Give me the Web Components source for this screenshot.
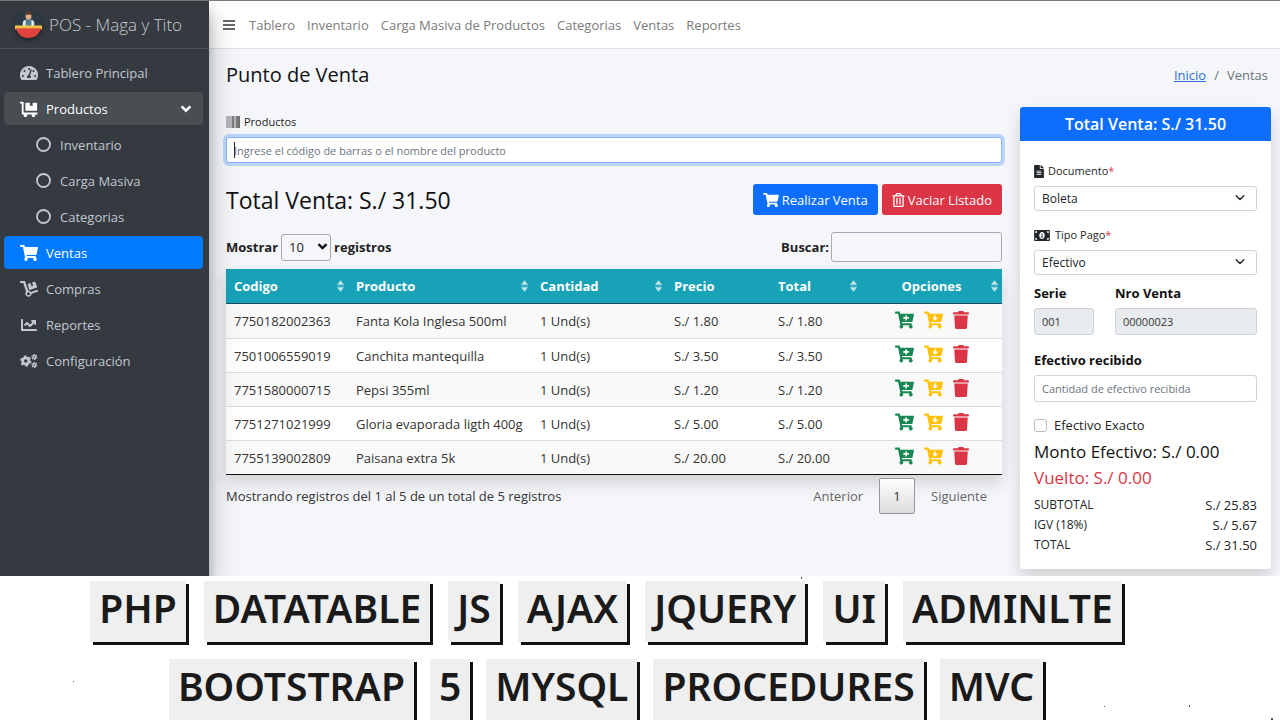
<!DOCTYPE html>
<html lang="es">
<head>
<meta charset="utf-8">
<title>POS - Maga y Tito</title>
<style>
html, body { height: 100%; }
body { margin: 0; overflow: hidden; font-family: "Open Sans", "Noto Sans", sans-serif; font-size: 13px; line-height: 20px; color: #212529; background: #fff; }
</style>
</head>
<body>
<pos-app></pos-app>
<script>
const ICONS = {
  cart: ['0 0 576 512', '<path d="M528 301l47-208c4-15-8-29-23-29H159l-9-45C148 8 138 0 127 0H24C11 0 0 11 0 24v16c0 13 11 24 24 24h70l70 343c-17 10-28 28-28 49a56 56 0 1 0 95-40h210a56 56 0 1 0 63-10l6-25c3-15-8-29-23-29H218l-6-32h293c11 0 21-8 23-19z"/>'],
  cartPlus: ['0 0 576 512', '<path fill-rule="evenodd" d="M528 301l47-208c4-15-8-29-23-29H159l-9-45C148 8 138 0 127 0H24C11 0 0 11 0 24v16c0 13 11 24 24 24h70l70 343c-17 10-28 28-28 49a56 56 0 1 0 95-40h210a56 56 0 1 0 63-10l6-25c3-15-8-29-23-29H218l-6-32h293c11 0 21-8 23-19zM408 168h-48v-40c0-9-7-16-16-16h-16c-9 0-16 7-16 16v40h-48c-9 0-16 7-16 16v16c0 9 7 16 16 16h48v40c0 9 7 16 16 16h16c9 0 16-7 16-16v-40h48c9 0 16-7 16-16v-16c0-9-7-16-16-16z"/>'],
  cartDown: ['0 0 576 512', '<path fill-rule="evenodd" d="M528 301l47-208c4-15-8-29-23-29H159l-9-45C148 8 138 0 127 0H24C11 0 0 11 0 24v16c0 13 11 24 24 24h70l70 343c-17 10-28 28-28 49a56 56 0 1 0 95-40h210a56 56 0 1 0 63-10l6-25c3-15-8-29-23-29H218l-6-32h293c11 0 21-8 23-19zM404 180h-44v-56c0-8-5-12-12-12h-24c-7 0-12 4-12 12v56h-44c-11 0-16 13-8 20l68 68c5 5 11 5 16 0l68-68c8-7 3-20-8-20z"/>'],
  trash: ['0 0 448 512', '<path d="M432 32H312l-9-19A24 24 0 0 0 281 0H167a24 24 0 0 0-22 13l-9 19H16A16 16 0 0 0 0 48v32a16 16 0 0 0 16 16h416a16 16 0 0 0 16-16V48a16 16 0 0 0-16-16zM53 467a48 48 0 0 0 48 45h246a48 48 0 0 0 48-45l21-339H32z"/>'],
  trashOutline: ['0 0 448 512', '<path d="M268 416h24a12 12 0 0 0 12-12V188a12 12 0 0 0-12-12h-24a12 12 0 0 0-12 12v216a12 12 0 0 0 12 12zM432 80h-82l-34-57A48 48 0 0 0 274 0H174a48 48 0 0 0-42 23L98 80H16A16 16 0 0 0 0 96v16a16 16 0 0 0 16 16h16v336a48 48 0 0 0 48 48h288a48 48 0 0 0 48-48V128h16a16 16 0 0 0 16-16V96a16 16 0 0 0-16-16zM172 51a6 6 0 0 1 5-3h94a6 6 0 0 1 5 3l18 29H154zM368 464H80V128h288zm-212-48h24a12 12 0 0 0 12-12V188a12 12 0 0 0-12-12h-24a12 12 0 0 0-12 12v216a12 12 0 0 0 12 12z"/>'],
  chart: ['0 0 512 512', '<path d="M496 384H64V80c0-9-7-16-16-16H16C7 64 0 71 0 80v336c0 18 14 32 32 32h464c9 0 16-7 16-16v-32c0-9-7-16-16-16zM464 96H346c-21 0-32 26-17 41l32 32-73 74-73-74c-13-12-33-12-46 0l-68 69c-7 6-7 16 0 23l22 22c7 7 17 7 23 0l46-46 73 74c13 12 33 12 46 0l96-96 32 32c15 15 41 4 41-17V112c0-9-7-16-16-16z"/>'],
  gauge: ['0 0 576 512', '<path fill-rule="evenodd" d="M288 32a288 288 0 0 0-249 433c6 10 17 15 28 15h442c11 0 22-5 28-15A288 288 0 0 0 288 32zM288 92a32 32 0 1 1 0 64 32 32 0 0 1 0-64zM96 384a32 32 0 1 1 0-64 32 32 0 0 1 0 64zm48-160a32 32 0 1 1 0-64 32 32 0 0 1 0 64zm336 160a32 32 0 1 1 0-64 32 32 0 0 1 0 64zm-48-160a32 32 0 1 1 0-64 32 32 0 0 1 0 64zM340 416H236c-24-38-4-90 40-96l57-172c10-18 46-10 44 12l-57 172c28 20 33 56 20 84z"/>'],
  flatbed: ['0 0 640 512', '<path d="M208 320h384c9 0 16-7 16-16V48c0-9-7-16-16-16H448v128l-48-32-48 32V32H208c-9 0-16 7-16 16v256c0 9 7 16 16 16zm416 64H128V16c0-9-7-16-16-16H16C7 0 0 7 0 16v32c0 9 7 16 16 16h48v368c0 9 7 16 16 16h54a64 64 0 1 0 116 0h172a64 64 0 1 0 116 0h70c9 0 16-7 16-16v-32c0-9-7-16-16-16z"/>'],
  dolly: ['0 0 576 512', '<path d="M294 278c6 3 12 5 18 9l230-77c9-3 13-12 10-21l-62-158c-3-9-12-13-20-10l-84 28 34 100-50 17-34-101-76 26c-9 3-13 12-10 20zM575 323l-10-30c-3-9-12-13-20-10L345 350c-18-24-46-40-79-41L163 11C161 4 154 0 147 0H16C7 0 0 7 0 16v32c0 9 7 16 16 16h86l93 273a100 100 0 1 0 175 74l195-68c9-3 13-12 10-20zM272 456a48 48 0 1 1 0-96 48 48 0 0 1 0 96z"/>'],
  cogs: ['0 0 640 512', '<g fill="none" stroke="currentColor"><circle cx="205" cy="256" r="110" stroke-width="96"/><circle cx="205" cy="256" r="172" stroke-width="56" stroke-dasharray="90 90"/><circle cx="510" cy="116" r="52" stroke-width="54"/><circle cx="510" cy="116" r="90" stroke-width="38" stroke-dasharray="47 47"/><circle cx="510" cy="396" r="52" stroke-width="54"/><circle cx="510" cy="396" r="90" stroke-width="38" stroke-dasharray="47 47"/></g>'],
  circle: ['0 0 512 512', '<circle cx="256" cy="256" r="222" fill="none" stroke="currentColor" stroke-width="62"/>'],
  chevron: ['0 0 16 16', '<path d="M3 5l5 5 5-5" fill="none" stroke="currentColor" stroke-width="2" stroke-linecap="round" stroke-linejoin="round"/>'],
  chevronBold: ['0 0 16 16', '<path d="M3 5l5 5 5-5" fill="none" stroke="currentColor" stroke-width="3"/>'],
  bars: ['0 0 12 12', '<path d="M0 2h12M0 6h12M0 10h12" stroke="currentColor" stroke-width="2"/>'],
  barcode: ['0 0 14 12', '<path d="M1 0v12M3 0v12M5 0v12M9 0v12" stroke="#777" stroke-width="1"/><path d="M7 0v12M11 0v12" stroke="#555" stroke-width="1.5"/><path d="M13 0v12" stroke="#444" stroke-width="1.5"/>'],
  file: ['0 0 384 512', '<path d="M224 136V0H24C11 0 0 11 0 24v464c0 13 11 24 24 24h336c13 0 24-11 24-24V160H248c-13 0-24-11-24-24zm64 236c0 7-5 12-12 12H108c-7 0-12-5-12-12v-8c0-7 5-12 12-12h168c7 0 12 5 12 12zm0-64c0 7-5 12-12 12H108c-7 0-12-5-12-12v-8c0-7 5-12 12-12h168c7 0 12 5 12 12zm0-72v8c0 7-5 12-12 12H108c-7 0-12-5-12-12v-8c0-7 5-12 12-12h168c7 0 12 5 12 12zm96-114v6H256V0h6c6 0 13 3 17 7l98 98c5 5 7 11 7 17z"/>'],
  money: ['0 0 640 448', '<path fill-rule="evenodd" d="M30 0h580q30 0 30 30v388q0 30-30 30H30q-30 0-30-30V30Q0 0 30 0zM48 48v80q72-8 80-80zM592 48h-80q8 72 80 80zM48 400h80q-8-72-80-80zM592 400v-80q-72 8-80 80zM320 84c-62 0-112 63-112 140s50 140 112 140 112-63 112-140S382 84 320 84z"/><path d="M286 160l26-18h26v132h28v28h-90v-28h28v-92h-18z"/>'],
  sort: ['0 0 8 13', '<path d="M4 0l4 5H0zM4 13l4-5H0z"/><path d="M0 6.500h8" stroke="currentColor" stroke-width="1" opacity=".4"/>']
};

const define = (name, html, setup) => {
  const template = document.createElement('template');
  template.innerHTML = html;
  customElements.define(name, class extends HTMLElement {
    connectedCallback() {
      if (this.shadowRoot) return;
      const root = this.attachShadow({ mode: 'open' });
      root.append(template.content.cloneNode(true));
      if (setup) setup(this, root);
    }
  });
};

define('pos-icon', `<style>
:host { display: inline-block; flex: none; width: 16px; height: 16px; }
svg { display: block; width: 100%; height: 100%; fill: currentColor; }
</style><svg aria-hidden="true"></svg>`, (el, root) => {
  const [box, shapes] = ICONS[el.getAttribute('name')];
  const svg = root.querySelector('svg');
  svg.setAttribute('viewBox', box);
  svg.innerHTML = shapes;
});

define('side-item', `<style>
:host { display: block; color: #c2c7d0; }
a { display: flex; align-items: center; height: 33px; padding: 0 10px 0 16px; border-radius: 4px; color: inherit; text-decoration: none; }
.icon { width: 18px; display: flex; justify-content: center; margin-right: 8px; }
.icon pos-icon { width: 18px; height: 16px; }
.caret { width: 14px; height: 14px; margin-left: auto; }
:host([open]) a { background: #494e53; color: #fff; }
:host([active]) a { background: #007bff; color: #fff; }
:host([sub]) a { padding-left: 30px; }
:host([sub]) .icon pos-icon { width: 15px; height: 15px; }
</style><a href="#"><span class="icon"></span><slot></slot></a>`, (el, root) => {
  root.querySelector('.icon').innerHTML = `<pos-icon name="${el.getAttribute('icon')}"></pos-icon>`;
  if (el.hasAttribute('open')) root.querySelector('a').insertAdjacentHTML('beforeend', '<pos-icon class="caret" name="chevronBold"></pos-icon>');
});

define('side-bar', `<style>
:host { display: block; background: #343a40; box-shadow: 0 14px 28px rgba(0,0,0,.25), 0 10px 10px rgba(0,0,0,.22); z-index: 2; }
.brand { display: flex; align-items: center; gap: 6px; height: 47px; padding: 0 14px; border-bottom: 1px solid #4b545c; color: #c8cbcf; text-decoration: none; font-size: 17px; font-weight: 300; white-space: nowrap; }
.brand svg { width: 29px; height: 29px; flex: none; filter: drop-shadow(0 2px 2px rgba(0,0,0,.4)); }
nav { display: flex; flex-direction: column; gap: 3px; padding: 7px 6px 7px 4px; }
</style>
<a class="brand" href="#"><svg viewBox="0 0 30 30" aria-hidden="true">
<circle cx="15" cy="15" r="14" fill="#2b3b45"/><path d="M9 17v-3q0-4 4-4h4q4 0 4 4v3z" fill="#e8ecef"/><path d="M12 10h6v7h-6z" fill="#4f7d92"/><rect x="12" y="3" width="6" height="7" rx="3" fill="#e3ae86"/><path d="M12 5q0-4 3-4t3 4z" fill="#5a3a2a"/>
<path d="M1 16h28v4H1z" fill="#f0c544"/><path d="M2 19h26q-3 10-13 10T2 19z" fill="#e3433e"/></svg>POS - Maga y Tito</a>
<nav>
<side-item icon="gauge">Tablero Principal</side-item>
<side-item icon="flatbed" open>Productos</side-item>
<side-item icon="circle" sub>Inventario</side-item>
<side-item icon="circle" sub>Carga Masiva</side-item>
<side-item icon="circle" sub>Categorias</side-item>
<side-item icon="cart" active>Ventas</side-item>
<side-item icon="dolly">Compras</side-item>
<side-item icon="chart">Reportes</side-item>
<side-item icon="cogs">Configuración</side-item>
</nav>`);

define('top-nav', `<style>
:host { display: flex; align-items: center; gap: 12px; height: 47px; padding: 0 14px; background: #fff; border-bottom: 1px solid #dee2e6; }
a { color: #7b7b7b; text-decoration: none; white-space: nowrap; }
button { display: flex; padding: 0; margin-right: 2px; border: 0; background: none; color: #666; }
pos-icon { width: 12px; height: 12px; }
</style>
<button aria-label="Menú"><pos-icon name="bars"></pos-icon></button>
<a href="#">Tablero</a><a href="#">Inventario</a><a href="#">Carga Masiva de Productos</a><a href="#">Categorias</a><a href="#">Ventas</a><a href="#">Reportes</a>`);

define('page-header', `<style>
:host { display: flex; align-items: center; justify-content: space-between; height: 52px; padding: 0 12px 0 17px; }
h1 { margin: 0; font-size: 20px; font-weight: 400; color: #111; }
nav { display: flex; gap: 8px; color: #6c757d; }
a { color: #2f6fd6; }
</style><h1><slot></slot></h1><nav aria-label="Ruta"><a href="#">Inicio</a><span>/</span><span>Ventas</span></nav>`);

define('product-search', `<style>
:host { display: block; }
label { display: flex; align-items: center; gap: 4px; height: 20px; margin: 5px 0 5px; font-size: 11px; color: #222; }
pos-icon { width: 14px; height: 12px; }
input { display: block; box-sizing: border-box; width: 100%; height: 26px; padding: 0 7px; border: 1px solid #86b7fe; border-radius: 3px; font: inherit; font-size: 11px; outline: 0; box-shadow: 0 0 0 3px #bdd5fb; background: linear-gradient(#222, #222) 7px 50% / 1px 16px no-repeat #fff; }
input::placeholder { color: #6c757d; opacity: 1; }
</style><label for="q"><pos-icon name="barcode"></pos-icon>Productos</label>
<input id="q" placeholder="Ingrese el código de barras o el nombre del producto">`);

define('sale-bar', `<style>
:host { display: flex; align-items: center; gap: 4px; height: 31px; margin-top: 21px; }
h2 { margin: 0 auto 0 0; font-size: 23px; font-weight: 400; line-height: 30px; color: #111; }
button { display: flex; align-items: center; gap: 3px; height: 31px; padding: 0 10px; border: 0; border-radius: 3px; background: #0d6efd; color: #fff; font: inherit; }
.danger { background: #dc3545; }
pos-icon { width: 16px; height: 14px; }
.danger pos-icon { width: 13px; }
</style><h2>Total Venta: S./ 31.50</h2>
<button><pos-icon name="cart"></pos-icon>Realizar Venta</button>
<button class="danger"><pos-icon name="trashOutline"></pos-icon>Vaciar Listado</button>`);

define('sale-table', `<style>
:host { display: block; }
.tools { display: flex; justify-content: space-between; align-items: center; height: 30px; margin: 17px 0 7px; font-weight: 700; color: #222; }
.tools > div { display: flex; align-items: center; gap: 3px; }
.pick { position: relative; display: flex; }
select { appearance: none; width: 50px; height: 27px; padding: 0 7px; border: 1px solid #aaa; border-radius: 3px; background: transparent; font: inherit; font-weight: 400; color: #222; }
.pick pos-icon { position: absolute; right: 2px; top: 6px; width: 13px; height: 13px; pointer-events: none; color: #111; }
.tools input { box-sizing: border-box; width: 171px; height: 30px; border: 1px solid #aaa; border-radius: 3px; background: transparent; font: inherit; }
.tools .find { gap: 2px; }
table { width: 100%; table-layout: fixed; border-collapse: separate; border-spacing: 0; border-bottom: 1px solid #111; box-shadow: 0 8px 16px rgba(0,0,0,.15); background: #fff; color: #333; }
th, td { box-sizing: border-box; padding: 0 8px; text-align: left; white-space: nowrap; }
th { height: 35px; background: #17a2b8; color: #fff; border-bottom: 1px solid #14505a; }
th div { display: flex; align-items: center; justify-content: space-between; margin-right: -4px; }
th pos-icon { width: 7px; height: 12px; color: #c5e4ea; }
th:last-child div::before { content: ""; width: 3px; }
td { height: 34px; border-top: 1px solid #ddd; }
tbody tr:first-child td { border-top: 0; }
tbody tr:nth-child(odd) { background: #f9f9f9; }
.ops { display: flex; justify-content: center; gap: 10px; padding-bottom: 3px; }
.ops button { display: flex; padding: 0; border: 0; background: none; color: #198754; }
.ops button pos-icon { width: 19px; height: 18px; }
.ops button + button { color: #ffc107; }
.ops button + button + button { color: #dc3545; }
.ops button + button + button pos-icon { width: 16px; }
.foot { display: flex; align-items: center; justify-content: space-between; margin-top: 3px; color: #333; }
.pages { display: flex; align-items: center; color: #666; }
.pages button { height: 36px; padding: 0 14px; border: 1px solid transparent; border-radius: 2px; background: none; font: inherit; color: inherit; }
.pages .now { width: 36px; padding: 0; border-color: #979797; background: linear-gradient(#fff, #dcdcdc); color: #333; margin: 0 1px; }
</style>
<div class="tools"><div><label for="n">Mostrar</label><span class="pick"><select id="n"><option>10</option><option>25</option></select><pos-icon name="chevronBold"></pos-icon></span><span>registros</span></div>
<div class="find"><label for="s">Buscar:</label><input id="s" type="search"></div></div>
<table><colgroup><col style="width:122px"><col style="width:184px"><col style="width:134px"><col style="width:104px"><col style="width:91px"><col style="width:141px"></colgroup>
<thead><tr></tr></thead><tbody></tbody></table>
<div class="foot"><span>Mostrando registros del 1 al 5 de un total de 5 registros</span>
<div class="pages"><button>Anterior</button><button class="now">1</button><button>Siguiente</button></div></div>`, (el, root) => {
  root.querySelector('thead tr').innerHTML = ['Codigo', 'Producto', 'Cantidad', 'Precio', 'Total', 'Opciones']
    .map(t => `<th scope="col"><div><span>${t}</span>${t === 'Precio' ? '' : '<pos-icon name="sort"></pos-icon>'}</div></th>`).join('');
  root.querySelector('tbody').innerHTML = [
    ['7750182002363', 'Fanta Kola Inglesa 500ml', '1.80'],
    ['7501006559019', 'Canchita mantequilla', '3.50'],
    ['7751580000715', 'Pepsi 355ml', '1.20'],
    ['7751271021999', 'Gloria evaporada ligth 400g', '5.00'],
    ['7755139002809', 'Paisana extra 5k', '20.00']
  ].map(([code, name, price]) => `<tr><td>${code}</td><td>${name}</td><td>1 Und(s)</td><td>S./ ${price}</td><td>S./ ${price}</td><td><div class="ops"><button aria-label="Aumentar"><pos-icon name="cartPlus"></pos-icon></button><button aria-label="Disminuir"><pos-icon name="cartDown"></pos-icon></button><button aria-label="Eliminar"><pos-icon name="trash"></pos-icon></button></div></td></tr>`).join('');
});

define('pay-card', `<style>
:host { display: block; background: #fff; border-radius: 3px; box-shadow: 0 8px 16px rgba(0,0,0,.16); font-size: 12px; color: #212529; }
h2 { margin: 0; height: 34px; border-radius: 3px 3px 0 0; background: #0d6efd; color: #fff; text-align: center; font-size: 16px; font-weight: 600; line-height: 34px; }
form { padding: 20px 14px 14px; }
label { display: flex; align-items: center; height: 20px; margin-bottom: 5px; font-size: 11px; }
label pos-icon { width: 10px; height: 13px; margin-right: 4px; }
label pos-icon[name=money] { width: 16px; height: 11px; margin-right: 5px; }
i { color: #dc3545; font-style: normal; }
.pick { position: relative; margin-bottom: 14px; }
.pick.tight { margin-bottom: 8px; }
.pick pos-icon { position: absolute; right: 11px; top: 6px; width: 12px; height: 12px; pointer-events: none; }
select, input { appearance: none; display: block; box-sizing: border-box; width: 100%; padding: 0 7px; border: 1px solid #ced4da; border-radius: 3px; background: #fff; color: #212529; font: inherit; }
select { height: 25px; }
input { height: 27px; font-size: 11px; }
input[readonly] { background: #e9ecef; color: #333; }
input::placeholder { color: #6c757d; opacity: 1; }
.pair { display: grid; grid-template-columns: 60px 1fr; gap: 21px; margin-bottom: 15px; }
.bold { font-size: 13px; font-weight: 700; color: #111; }
.check { gap: 7px; margin: 13px 0 4px; font-size: 13px; }
.check input { width: 13px; height: 13px; margin: 0; padding: 0; border-color: #bbb; }
p { margin: 0; font-size: 17px; line-height: 26px; color: #111; }
p.change { color: #dc3545; }
dl { margin: 4px 0 0; display: grid; grid-template-columns: 1fr auto; line-height: 20px; }
dd { margin: 0; text-align: right; font-size: 13px; }
</style>
<h2>Total Venta: S./ 31.50</h2>
<form>
<label for="doc"><pos-icon name="file"></pos-icon>Documento<i>*</i></label>
<div class="pick"><select id="doc"><option>Boleta</option></select><pos-icon name="chevron"></pos-icon></div>
<label for="pay"><pos-icon name="money"></pos-icon>Tipo Pago<i>*</i></label>
<div class="pick tight"><select id="pay"><option>Efectivo</option></select><pos-icon name="chevron"></pos-icon></div>
<div class="pair"><div><label class="bold" for="serie">Serie</label><input id="serie" value="001" readonly></div>
<div><label class="bold" for="nro">Nro Venta</label><input id="nro" value="00000023" readonly></div></div>
<label class="bold" for="cash">Efectivo recibido</label><input id="cash" placeholder="Cantidad de efectivo recibida">
<label class="check"><input type="checkbox">Efectivo Exacto</label>
<p>Monto Efectivo: S./ 0.00</p><p class="change">Vuelto: S./ 0.00</p>
<dl><dt>SUBTOTAL</dt><dd>S./ 25.83</dd><dt>IGV (18%)</dt><dd>S./ 5.67</dd><dt>TOTAL</dt><dd>S./ 31.50</dd></dl>
</form>`);

define('tech-tag', `<style>
:host { display: block; height: 61px; padding: 0 9px; background: #efefef; box-shadow: 3px 3px 0 #111; font: 600 39px/54px "Noto Sans", "Open Sans", sans-serif; color: #1a1a1a; }
</style><slot></slot>`);

define('tech-strip', `<style>
:host { display: flex; flex-direction: column; gap: 17px; padding: 5px 68px 0 0; overflow: hidden; position: relative; }
div { display: flex; justify-content: center; gap: 18px; }
div + div { gap: 16px; }
svg { position: absolute; inset: 0; width: 1280px; height: 144px; fill: #555; pointer-events: none; }
</style>
<div><tech-tag>PHP</tech-tag><tech-tag>DATATABLE</tech-tag><tech-tag>JS</tech-tag><tech-tag>AJAX</tech-tag><tech-tag>JQUERY</tech-tag><tech-tag>UI</tech-tag><tech-tag>ADMINLTE</tech-tag></div>
<div><tech-tag>BOOTSTRAP</tech-tag><tech-tag>5</tech-tag><tech-tag>MYSQL</tech-tag><tech-tag>PROCEDURES</tech-tag><tech-tag>MVC</tech-tag></div>
<svg aria-hidden="true"><path d="M73 105h1v1h-1zM801 1h1v2h-1zM1104 130h1v1h-1zM1189 129h1v2h-1zM1271 142h2v2h-2z"/></svg>`);

define('pos-app', `<style>
:host { display: flex; flex-direction: column; height: 100%; }
.shell { flex: none; display: grid; grid-template-columns: 209px minmax(0, 1fr); overflow: hidden; background: #f4f6f9; border-top: 1px solid #777; box-sizing: border-box; }
.cols { display: grid; grid-template-columns: minmax(0, 1fr) 251px; gap: 18px; align-items: start; padding: 6px 9px 7px 17px; }
tech-strip { flex: 1; min-height: 0; }
</style>
<div class="shell"><side-bar></side-bar><main><top-nav></top-nav><page-header>Punto de Venta</page-header>
<div class="cols"><section><product-search></product-search><sale-bar></sale-bar><sale-table></sale-table></section><pay-card></pay-card></div></main></div>
<tech-strip></tech-strip>`);
</script>
</body>
</html>
